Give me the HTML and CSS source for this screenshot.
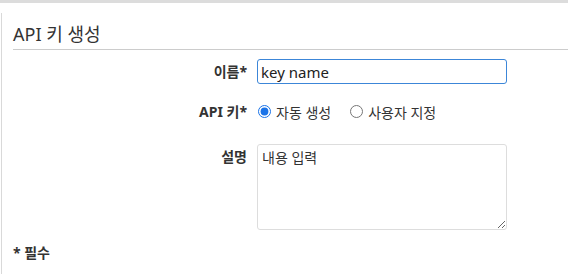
FILE: index.html
```html
<!DOCTYPE html>
<html lang="ko">
<head>
<meta charset="utf-8">
<link rel="stylesheet" href="styles.css">
</head>
<body>
<div class="topbar"></div>
<div class="panel">
  <h2 class="title">API 키 생성</h2>
  <div class="form">
    <label class="label" for="name">이름*</label>
    <div class="field"><input id="name" class="input" type="text" value="key name"></div>
    <div class="label key-label">API 키*</div>
    <div class="field radios">
      <label class="radio"><input type="radio" name="k" checked> 자동 생성</label>
      <label class="radio"><input type="radio" name="k"> 사용자 지정</label>
    </div>
    <label class="label desc-label" for="desc">설명</label>
    <div class="field"><textarea id="desc" class="textarea">내용 입력</textarea></div>
  </div>
  <div class="required">* 필수</div>
</div>
</body>
</html>
```
FILE: styles.css
```css
html, body {
  margin: 0;
  padding: 0;
  background: #fff;
  font-family: "Noto Sans", "Noto Sans CJK KR", sans-serif;
  color: #333;
  overflow: hidden;
}
.topbar {
  height: 3px;
  background: #dcdcdc;
}
.panel {
  box-sizing: border-box;
  margin: 10px 0 0 1px;
  border-left: 1px solid #d9d9d9;
  padding: 8px 0 0 11px;
  height: 261px;
}
.title {
  margin: 0;
  font-size: 18px;
  font-weight: normal;
  line-height: 26px;
  padding-bottom: 2px;
  border-bottom: 1px solid #ccc;
  color: #333;
}
.form {
  display: grid;
  grid-template-columns: 234px 250px;
  column-gap: 10px;
  margin-top: 9px;
}
.label {
  font-weight: bold;
  font-size: 14px;
  text-align: right;
  color: #333;
  line-height: 25px;
}
.input {
  box-sizing: border-box;
  width: 250px;
  height: 25px;
  border: 1px solid #3c86d8;
  border-radius: 3px;
  outline: none;
  padding: 0 3px;
  font-family: inherit;
  font-size: 15px;
  color: #222;
}
.key-label { margin: 15px 0; }
.radios {
  display: flex;
  gap: 18px;
  align-items: center;
  margin: 15px 0;
  font-size: 14px;
}
.radio {
  display: flex;
  align-items: center;
  gap: 5px;
}
.radio input {
  margin: 0 0 0 1px;
  width: 13px;
  height: 13px;
  accent-color: #1a73e8;
}
.desc-label { margin-top: 5px; }
.textarea {
  box-sizing: border-box;
  width: 250px;
  height: 86px;
  margin-top: 5px;
  border: 1px solid #ddd;
  border-radius: 3px;
  padding: 2px 4px;
  font-family: inherit;
  font-size: 14px;
  color: #333;
  display: block;
  resize: vertical;
}
.required {
  margin-top: 12px;
  font-weight: bold;
  font-size: 14px;
}
```
